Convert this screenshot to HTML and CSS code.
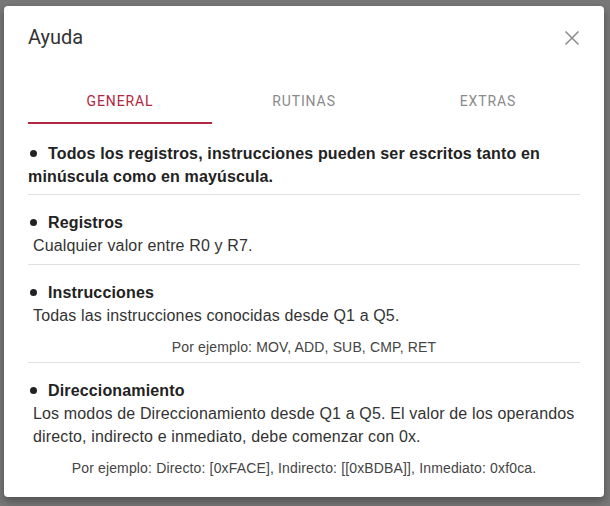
FILE: index.html
```html
<!DOCTYPE html>
<html lang="es">
<head>
<meta charset="utf-8">
<title>Ayuda</title>
<link rel="stylesheet" href="styles.css">
</head>
<body>
<div class="backdrop">
  <div class="modal">
    <div class="modal-header">
      <h2 class="modal-title">Ayuda</h2>
      <button class="close" aria-label="Cerrar">
        <svg width="16" height="16" viewBox="0 0 16 16"><path d="M1.5 1.5L14.5 14.5M14.5 1.5L1.5 14.5" stroke="#8f8f8f" stroke-width="1.6" fill="none"/></svg>
      </button>
    </div>
    <div class="tabs">
      <div class="tab active">General</div>
      <div class="tab">Rutinas</div>
      <div class="tab">Extras</div>
    </div>
    <div class="content">
      <div class="item">
        <p class="head"><span class="dot"></span>Todos los registros, instrucciones pueden ser escritos tanto en minúscula como en mayúscula.</p>
      </div>
      <div class="item">
        <p class="head"><span class="dot"></span>Registros</p>
        <p class="desc">Cualquier valor entre R0 y R7.</p>
      </div>
      <div class="item">
        <p class="head"><span class="dot"></span>Instrucciones</p>
        <p class="desc">Todas las instrucciones conocidas desde Q1 a Q5.</p>
        <p class="example">Por ejemplo: MOV, ADD, SUB, CMP, RET</p>
      </div>
      <div class="item last">
        <p class="head"><span class="dot"></span>Direccionamiento</p>
        <p class="desc">Los modos de Direccionamiento desde Q1 a Q5. El valor de los operandos directo, indirecto e inmediato, debe comenzar con 0x.</p>
        <p class="example">Por ejemplo: Directo: [0xFACE], Indirecto: [[0xBDBA]], Inmediato: 0xf0ca.</p>
      </div>
    </div>
  </div>
</div>
</body>
</html>
```

FILE: styles.css
```css
* { box-sizing: border-box; }
html, body { margin: 0; padding: 0; }
body {
  width: 610px;
  height: 506px;
  overflow: hidden;
  background: #787878;
  font-family: "Liberation Sans", Arial, sans-serif;
}
.backdrop {
  padding: 6px 6px 0 4px;
}
.modal {
  width: 600px;
  height: 491px;
  background: #fff;
  border-radius: 4px;
  padding: 0 24px;
  box-shadow: 0 4px 10px rgba(0,0,0,0.35);
}
.modal-header {
  display: flex;
  justify-content: space-between;
  align-items: flex-start;
  padding-top: 15px;
  height: 70px;
}
.modal-title {
  margin: 0;
  font-family: Roboto, "Liberation Sans", sans-serif;
  font-weight: 400;
  font-size: 20px;
  line-height: 32px;
  color: #333;
}
.close {
  border: 0;
  background: none;
  padding: 0;
  margin: 9px 0 0 0;
  width: 16px;
  height: 16px;
  display: flex;
}
.tabs {
  display: flex;
  height: 48px;
}
.tab {
  flex: 1;
  display: flex;
  align-items: center;
  justify-content: center;
  font-family: Roboto, "Liberation Sans", sans-serif;
  font-size: 14px;
  letter-spacing: 0.9px;
  text-transform: uppercase;
  color: #8a8a8a;
  border-bottom: 2px solid transparent;
  padding-top: 4px;
}
.tab.active {
  color: #b3273e;
  border-bottom-color: #b3273e;
}
.item {
  border-bottom: 1px solid #e0e0e0;
  padding: 16px 0 7px;
  letter-spacing: 0.15px;
}
.item:first-child { padding-top: 18px; padding-bottom: 6px; }
.item.last { border-bottom: 0; }
.item p { margin: 0; }
.head {
  font-size: 16px;
  font-weight: 700;
  line-height: 23px;
  color: #222;
}
.dot {
  display: inline-block;
  width: 7px;
  height: 7px;
  border-radius: 50%;
  background: #222;
  margin: 0 11px 0 2px;
  vertical-align: 2px;
}
.desc {
  font-size: 16px;
  line-height: 23px;
  color: #333;
  padding-left: 5px;
}
.item .example {
  font-size: 14px;
  line-height: 20px;
  color: #444;
  text-align: center;
  margin-top: 10px;
}
.item:nth-child(3) { padding-bottom: 5px; }
```
